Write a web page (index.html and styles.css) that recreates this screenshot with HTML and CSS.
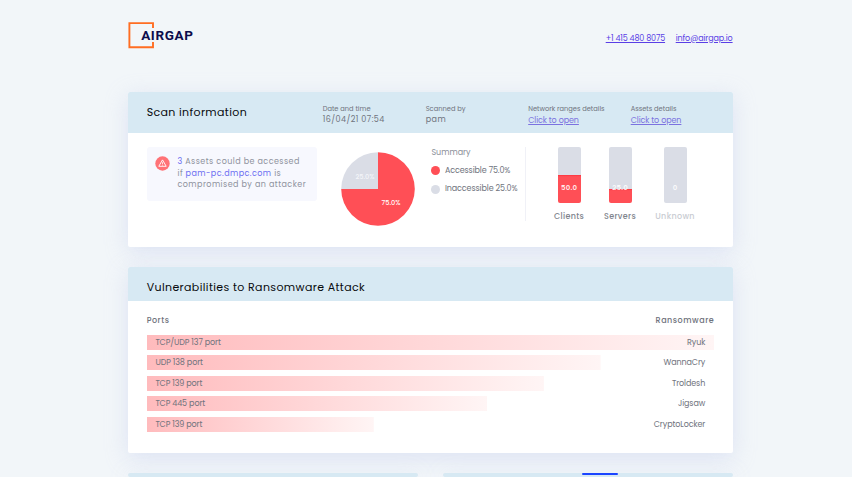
FILE: index.html
```html
<!DOCTYPE html>
<html lang="en">
<head>
<meta charset="utf-8">
<title>Airgap scan report</title>
<link rel="stylesheet" href="styles.css">
</head>
<body>
<header class="top">
  <div class="logo">
    <svg class="logo-mark" width="26" height="28" viewBox="0 0 26 28"><path d="M25 7V2.1H1.4v24.1H25V21" fill="none" stroke="#ff6d22" stroke-width="1.9"/></svg>
    <span class="logo-name">AIRGAP</span>
  </div>
  <nav class="contact"><a class="phone" href="#">+1 415 480 8075</a><a class="mail" href="#">info@airgap.io</a></nav>
</header>
<main>
  <section class="card scan">
    <div class="scan-head">
      <h2 class="title-scan">Scan information</h2>
      <div class="meta"><span class="label">Date and time</span><span class="value v-date">16/04/21 07:54</span></div>
      <div class="meta"><span class="label">Scanned by</span><span class="value v-by">pam</span></div>
      <div class="meta"><span class="label">Network ranges details</span><a class="value open" href="#">Click to open</a></div>
      <div class="meta"><span class="label">Assets details</span><a class="value open" href="#">Click to open</a></div>
    </div>
    <div class="scan-body">
      <div class="notice">
        <svg width="15" height="15" viewBox="0 0 15 15"><circle cx="7.5" cy="7.5" r="7.2" fill="#ff7276"/><path d="M7.5 3.9 11.2 10.3H3.8Z" fill="none" stroke="#fff" stroke-width=".9" stroke-linejoin="round"/><path d="M7.5 6.2v2M7.5 8.8v.7" stroke="#fff" stroke-width=".8"/></svg>
        <p><span><b>3</b> Assets could be accessed</span><span>if <b>pam-pc.dmpc.com</b> is</span><span>compromised by an attacker</span></p>
      </div>
      <svg class="pie" width="74" height="74" viewBox="0 0 74 74"><path d="M37 37V.2A36.8 36.8 0 1 1 .2 37Z" fill="#ff4f56"/><path d="M37 37V.2A36.8 36.8 0 0 0 .2 37Z" fill="#dadde6"/><text x="14.5" y="26.5" textLength="19" class="pie-a">25.0%</text><text x="40.5" y="52.7" textLength="19" class="pie-b">75.0%</text></svg>
      <div class="summary">
        <div class="sum-title">Summary</div>
        <div class="legend"><i class="dot red"></i><span>Accessible 75.0%</span></div>
        <div class="legend"><i class="dot"></i><span>Inaccessible 25.0%</span></div>
      </div>
      <div class="gauges">
        <div class="gauge"><div class="tube half"><span>50.0</span></div><div class="g-name">Clients</div></div>
        <div class="gauge"><div class="tube quarter"><span>25.0</span></div><div class="g-name">Servers</div></div>
        <div class="gauge last"><div class="tube"><span>0</span></div><div class="g-name muted">Unknown</div></div>
      </div>
    </div>
  </section>
  <section class="card vuln">
    <div class="vuln-head"><h2 class="title-vuln">Vulnerabilities to Ransomware Attack</h2></div>
    <div class="vuln-body">
      <div class="cols"><span>Ports</span><span>Ransomware</span></div>
      <div class="row w100"><span>TCP/UDP 137 port</span><span>Ryuk</span></div>
      <div class="row w80"><span>UDP 138 port</span><span>WannaCry</span></div>
      <div class="row w70"><span>TCP 139 port</span><span>Troldesh</span></div>
      <div class="row w60"><span>TCP 445 port</span><span>Jigsaw</span></div>
      <div class="row w40"><span>TCP 139 port</span><span>CryptoLocker</span></div>
    </div>
  </section>
  <div class="next"><section class="card stub"></section><section class="card stub"><i class="tab"></i></section></div>
</main>
</body>
</html>
```
FILE: styles.css
```css
* { box-sizing: border-box; }
body { margin: 0; height: 477px; overflow: hidden; background: #f2f6f9; font: 8px/12px Poppins, Inter, "Open Sans", sans-serif; color: #6f737d; }
h2, p { margin: 0; font-weight: 400; }
span { white-space: nowrap; }
.top { width: 604.5px; height: 92px; margin-left: 128.2px; padding-top: 21px; display: flex; justify-content: space-between; }
.logo { display: flex; height: 28px; align-items: center; }
.logo-name { margin-left: -13px; font: 700 13.5px/28px Roboto, sans-serif; letter-spacing: .6px; color: #0c0c4c; }
.contact { display: flex; gap: 10px; padding-top: 11.5px; }
.contact a { color: #5a3fe6; white-space: nowrap; }
.phone { width: 60px; letter-spacing: -.15px; }
.mail { width: 57px; letter-spacing: -.1px; }
main { width: 604.5px; margin-left: 128.2px; }
.card { background: #fff; border-radius: 2px; box-shadow: 0 5px 22px rgba(190, 199, 235, .42); }
.scan { height: 154.5px; }
.scan-head { height: 41px; padding-left: 18.5px; background: #d7e9f3; display: grid; grid-template-columns: 176px 103px 102.5px 102.5px 1fr; border-radius: 2px 2px 0 0; }
.scan-head h2 { color: #080a0d; font-size: 11px; line-height: 41px; }
.title-scan { letter-spacing: .36px; }
.meta { padding-top: 11px; display: flex; flex-direction: column; align-items: flex-start; }
.label { font-size: 6.7px; line-height: 11px; }
.value { font-size: 8px; line-height: 11px; }
.v-date { letter-spacing: .45px; }
.v-by { letter-spacing: .5px; }
.open { color: #7b72e0; letter-spacing: -.1px; padding-top: 1px; }
.scan-body { display: flex; padding: 13.5px 18.5px 0; }
.notice { flex: none; width: 170.5px; height: 54px; border-radius: 3px; background: #f7f8fe; display: flex; padding: 9px 0 0 8.5px; color: #8e929d; }
.notice svg { flex: none; }
.notice p { margin-left: 7.3px; padding-top: .5px; }
.notice p span { display: block; font-size: 8px; line-height: 11.7px; letter-spacing: .45px; }
.notice b { font-weight: 400; color: #6b6ef2; }
.pie { flex: none; margin: 5px 0 0 23.5px; }
.pie text { font-size: 6.6px; font-weight: 500; fill: #fff; }
.pie .pie-a { fill: #f4f5f9; }
.summary { flex: none; width: 95px; height: 74px; margin-left: 16.7px; border-right: 1px solid #f0f1f7; }
.sum-title { color: #8b8f99; font-size: 8px; line-height: 12px; margin-bottom: 3px; }
.legend { display: flex; align-items: center; height: 18.5px; gap: 4.5px; letter-spacing: -.1px; }
.dot { width: 9px; height: 9px; border-radius: 50%; background: #dadde6; flex: none; }
.red { background: #ff4f56; }
.gauges { display: flex; padding-left: 17.2px; }
.gauge { width: 51px; display: flex; flex-direction: column; align-items: center; }
.last { width: 59px; }
.tube { width: 23px; height: 56px; border-radius: 2px; background: #dadde6; color: #fff; font-size: 7px; font-weight: 600; text-align: center; padding-top: 35px; letter-spacing: .25px; }
.half { background: linear-gradient(#dadde6 50%, #fc323c 50%, #ff4f56 53%); }
.quarter { background: linear-gradient(#dadde6 75%, #fc323c 75%, #ff4f56 78%); }
.tube span { opacity: .88; }
.g-name { margin-top: 8.5px; font-weight: 500; letter-spacing: .35px; color: #80848d; }
.muted { color: #c9ccd2; }
.vuln { margin-top: 20.5px; height: 186px; }
.vuln-head { height: 34px; padding: 7px 18.5px 0; background: #d7e9f3; border-radius: 2px 2px 0 0; }
.vuln-head h2 { color: #080a0d; font-size: 11px; line-height: 27px; }
.title-vuln { letter-spacing: .37px; }
.vuln-body { padding: 14px 18.5px 0; }
.cols { display: flex; justify-content: space-between; font-weight: 500; margin-bottom: 7.5px; letter-spacing: .52px; }
.row { height: 15px; margin-bottom: 5.6px; padding: 0 9px 0 8.7px; display: flex; justify-content: space-between; letter-spacing: -.1px; line-height: 16px; background: linear-gradient(90deg, #ffbbbd, #fff5f5) no-repeat; }
.w80 { background-size: 80% 100%; }
.w70 { background-size: 70% 100%; }
.w60 { background-size: 60% 100%; }
.w40 { background-size: 40% 100%; }
.next { display: flex; justify-content: space-between; margin-top: 20px; }
.stub { width: 290px; height: 4px; background: #d7e9f3; display: flex; justify-content: center; }
.tab { width: 36px; height: 2px; margin-left: 24px; background: #1b45ff; border-radius: 1px; }
```
